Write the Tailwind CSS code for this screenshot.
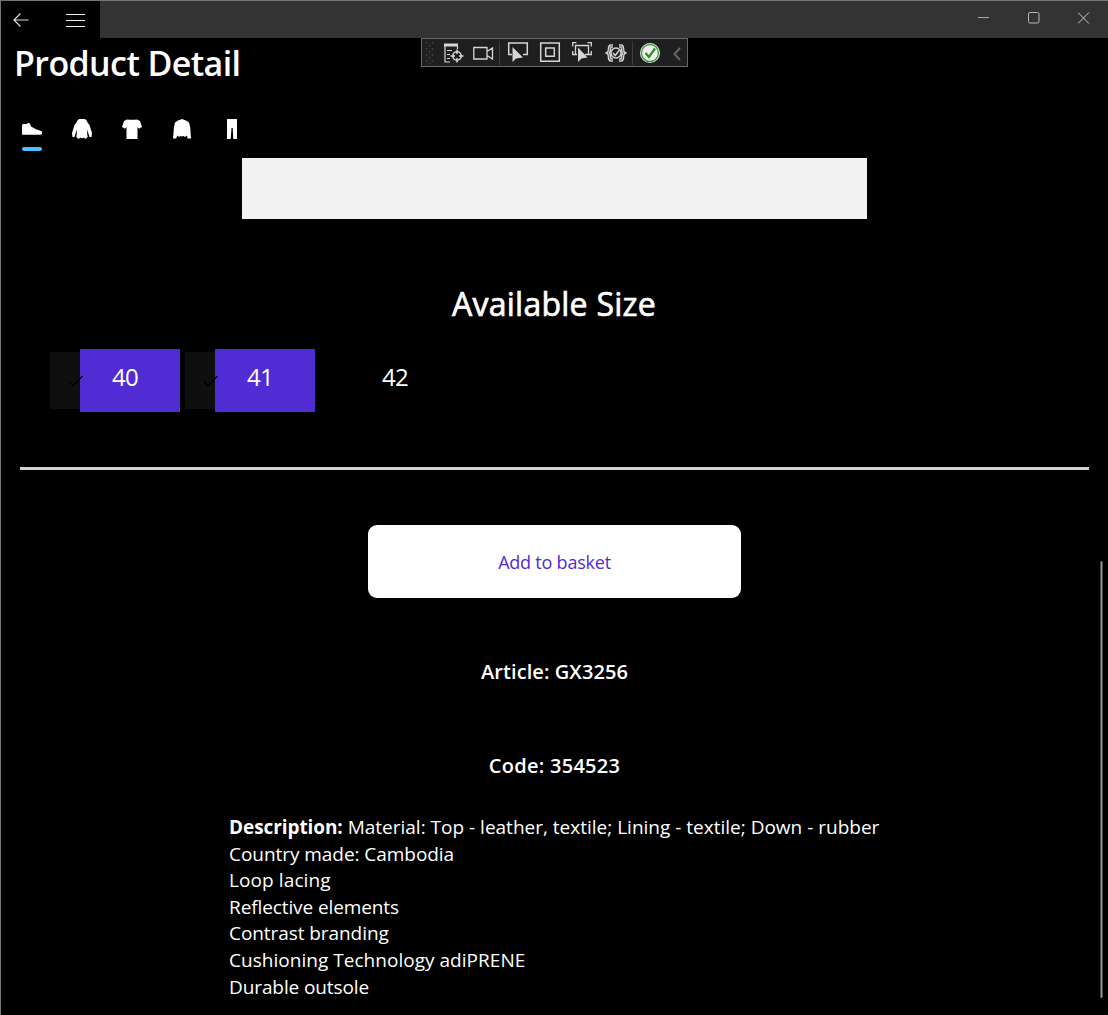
<!DOCTYPE html>
<html lang="en">
<head>
<meta charset="utf-8">
<title>Product Detail</title>
<script src="https://cdn.jsdelivr.net/npm/@tailwindcss/browser@4"></script>
</head>
<body class="bg-black">
<div class="relative flex h-[1015px] w-[1108px] flex-col overflow-hidden border-t border-l border-[#747674] bg-black font-['Open_Sans','Noto_Sans',sans-serif] text-white">
  <!-- Title bar -->
  <header class="flex h-[37px] shrink-0 bg-[#333333]">
    <div class="flex w-[99px] items-center bg-black">
      <button class="ml-3" aria-label="Back"><svg class="block h-4 w-4" viewBox="0 0 16 16" fill="none" stroke="#ddd" stroke-width="1.2"><path d="M15.500 8H1M7.500 1.500 1 8 7.500 14.500"/></svg></button>
      <button class="ml-[37px]" aria-label="Menu"><svg class="block h-4 w-5" viewBox="0 0 20 16" fill="none" stroke="#eee"><path d="M0 2.500H19M0 8.500H19M0 14.500H19"/></svg></button>
    </div>
    <div class="ml-auto flex items-center gap-[38px] pr-[18px] pb-1">
      <svg class="h-3 w-3" viewBox="0 0 12 12" fill="none" stroke="#aaa"><path d="M0 5.500H11"/></svg>
      <svg class="h-3 w-3" viewBox="0 0 12 12" fill="none" stroke="#b8b8b8"><rect x=".5" y=".5" width="10.500" height="10.500" rx="1.500"/></svg>
      <svg class="h-3 w-3" viewBox="0 0 12 12" fill="none" stroke="#c8c8c8"><path d="M0 .5 11 11.500M11 .5 0 11.500"/></svg>
    </div>
  </header>

  <h1 class="h-[74px] shrink-0 pl-[13px] text-[34px] leading-[50px] font-semibold whitespace-nowrap"><span class="tracking-[-0.6px]">Product Detail</span></h1>

  <!-- Category tabs -->
  <nav class="ml-[21px] flex h-[46px] shrink-0 gap-[30px] pt-[7px]">
    <div class="flex flex-col gap-2">
      <svg class="h-5 w-5" viewBox="0 0 20 20" fill="#fff"><path d="M0 6 1 5 5 5 6 3.700 8 4.500 9 7.500 13.500 10 19 12 20 12.500V14.800L19 15.800H0Z"/></svg>
      <div class="h-1 w-5 rounded-full bg-[#4cc2ff]"></div>
    </div>
    <svg class="h-5 w-5" viewBox="0 0 20 20" fill="#fff"><path d="M7 0H13L15 2 15.500 3.500 17.500 6 20 14 19.500 18H17.500L15.200 10.500V15L15.700 18 13.500 20 11.500 18.500 10 19.500 8.500 18.500 6.500 20 4.300 18 4.800 15V10.500L2.500 18H.5L0 14 2.500 6 4.500 3.500 5 2Z"/></svg>
    <svg class="h-5 w-5" viewBox="0 0 20 20" fill="#fff"><path d="M5 .5Q10 1 15 .5L18 2 20 8 17 9.800 15.500 8V20H4.500V8L3 9.800 0 8 2 2Z"/></svg>
    <svg class="h-5 w-5" viewBox="0 0 20 20" fill="#fff"><path d="M6 1.500 10 0 14 1.500 17 3.500 18.200 8 19 19.500H15.500L15 16.500 13 18 11.500 17 10 17.500 8.500 17 7 18 5.500 16.500 4 19.500H1L2 8 3 3.500Z"/></svg>
    <svg class="h-5 w-5" viewBox="0 0 20 20" fill="#fff"><path d="M5 0H15V20H11.300L10.700 9H9.500L8.700 20H5Z"/></svg>
  </nav>

  <main class="flex flex-col">
    <div class="ml-[241px] h-[61px] w-[625px] bg-[#f2f2f2]"></div>
    <h2 class="mt-[63px] h-11 text-center text-[32px] leading-[44px]"><span class="mr-px tracking-[0.25px] whitespace-nowrap [-webkit-text-stroke:0.7px_#fff]">Available Size</span></h2>

    <!-- Size options -->
    <ul class="mt-[23px] ml-[49px] flex h-[63px] gap-[5px] text-[24px] tracking-[-0.8px]">
      <li class="relative flex w-[130px] items-center">
        <div class="h-[57px] w-[30px] bg-[#0f0f0f]"></div>
        <div class="h-[63px] w-[100px] bg-[#512bd4] pr-2.5 text-center leading-[56px]">40</div>
        <svg class="absolute top-[26px] left-[17px] h-3 w-[17px]" viewBox="0 0 17 12" fill="none" stroke="#000" stroke-width="1.300"><path d="M1.500 6 6 10.500 15.500 1"/></svg>
      </li>
      <li class="relative flex w-[130px] items-center">
        <div class="h-[57px] w-[30px] bg-[#0f0f0f]"></div>
        <div class="h-[63px] w-[100px] bg-[#512bd4] pr-2.5 text-center leading-[56px]">41</div>
        <svg class="absolute top-[26px] left-[17px] h-3 w-[17px]" viewBox="0 0 17 12" fill="none" stroke="#000" stroke-width="1.300"><path d="M1.500 6 6 10.500 15.500 1"/></svg>
      </li>
      <li class="w-[130px] pl-[30px]"><div class="w-[100px] pr-2.5 text-center leading-[56px]">42</div></li>
    </ul>

    <hr class="mt-[55px] ml-[19px] h-[3px] w-[1069px] border-0 bg-[#d3d3d3]">

    <button class="mt-[55px] ml-[367px] h-[73px] w-[373px] rounded-[9px] bg-white pt-px text-[18px] tracking-[-0.22px] text-[#512bd4]">Add to basket</button>
    <p class="mt-[60px] h-7 text-center text-[20px] leading-7 font-semibold"><span class="tracking-[0.08px]">Article: GX3256</span></p>
    <p class="mt-[66px] h-7 text-center text-[20px] leading-7 font-semibold"><span class="tracking-[0.28px]">Code: 354523</span></p>
    <div class="mt-[34px] ml-[228px] text-[19px] leading-[26.600px] whitespace-nowrap">
      <p><b class="font-bold tracking-[-0.08px]">Description:</b><span> Material: Top - leather, textile; Lining - textile; Down - rubber</span></p>
      <p class="tracking-[-0.05px]">Country made: Cambodia</p>
      <p class="tracking-[0.1px]">Loop lacing</p>
      <p class="tracking-[-0.1px]">Reflective elements</p>
      <p class="tracking-[-0.07px]">Contrast branding</p>
      <p class="tracking-[0.03px]">Cushioning Technology adiPRENE</p>
      <p class="tracking-[-0.1px]">Durable outsole</p>
    </div>
  </main>

  <!-- Debug toolbar floating over the page -->
  <div class="absolute top-[37px] left-[420px] h-[29px] w-[267px] border border-[#666] bg-[#1f1f1f]">
    <svg class="block h-[27px] w-[265px]" viewBox="422 39 265 27" fill="none" stroke="#d6d6d6" stroke-width="1.500">
      <g stroke="#484848" stroke-dasharray="1.500 4.500"><path d="M426.500 42V64M432.500 42V64"/><path d="M429.500 45V64"/></g>
      <path d="M444 45H458" stroke-width="3"/><path d="M445 46V62H450M447 50.500H452M447 54.500H450M447 58.500H450M457.500 46V49" stroke-width="1.200"/>
      <circle cx="457" cy="56" r="4.200"/><path d="M457 49.500V54M457 58V62.500M450.500 56H455M459 56H463.500"/>
      <path d="M473.800 47.500H487V59H473.800ZM487 51.500 492.500 48V59L487 55.500" stroke-width="1.300"/>
      <path d="M499.500 41V65M632.500 41V65" stroke="#3d3d3d" stroke-width="1"/>
      <path d="M512 54.500H508.700V43H527.300V54.500H523"/>
      <path d="M512.500 47V62L516 58.500 523 57.500Z" fill="#d6d6d6" stroke="none"/>
      <path d="M540.700 43H559.300V61.300H540.700Z"/><path d="M545.700 48H554.300V56.300H545.700Z"/>
      <path d="M576.500 42.700H572.700V46.500M587.500 42.700H591.300V46.500M572.700 51V54.500H576M591.300 51V54.500H587M577 54.500H575.500V45.500H588.500V54.500H585" stroke-width="1.300"/>
      <path d="M578 47.500V62L581.500 58.500 587.500 57.500Z" fill="#d6d6d6" stroke="none"/>
      <path d="M613 46H611Q609.500 46 609.500 49 609.500 52 608 53 609.500 54 609.500 57 609.500 60 611 60H613M619 46H621Q622.500 46 622.500 49 622.500 52 624 53 622.500 54 622.500 57 622.500 60 621 60H619" stroke-width="3.600"/>
      <path d="M613 46H611Q609.500 46 609.500 49 609.500 52 608 53 609.500 54 609.500 57 609.500 60 611 60H613M619 46H621Q622.500 46 622.500 49 622.500 52 624 53 622.500 54 622.500 57 622.500 60 621 60H619" stroke="#444" stroke-width=".8"/>
      <circle cx="616" cy="53" r="5" fill="#1f1f1f"/><path d="M613 53 615.300 55.500 619 50.500"/>
      <circle cx="650" cy="53" r="10" fill="#eee" stroke="none"/><circle cx="650" cy="53" r="8.500" stroke="#38a03b" stroke-width="1.300"/><path d="M645.500 53 649 57 655 48.500" stroke="#2a8f2d" stroke-width="2.200"/>
      <path d="M680 48 674.500 54 680 60" stroke="#666" stroke-width="2"/>
    </svg>
  </div>

  <!-- Scroll indicator -->
  <div class="absolute top-[560px] left-[1099px] h-[437px] w-[3px] rounded-full border-x border-[#4a4a4a] bg-[#9a9a9a]"></div>
</div>
</body>
</html>
